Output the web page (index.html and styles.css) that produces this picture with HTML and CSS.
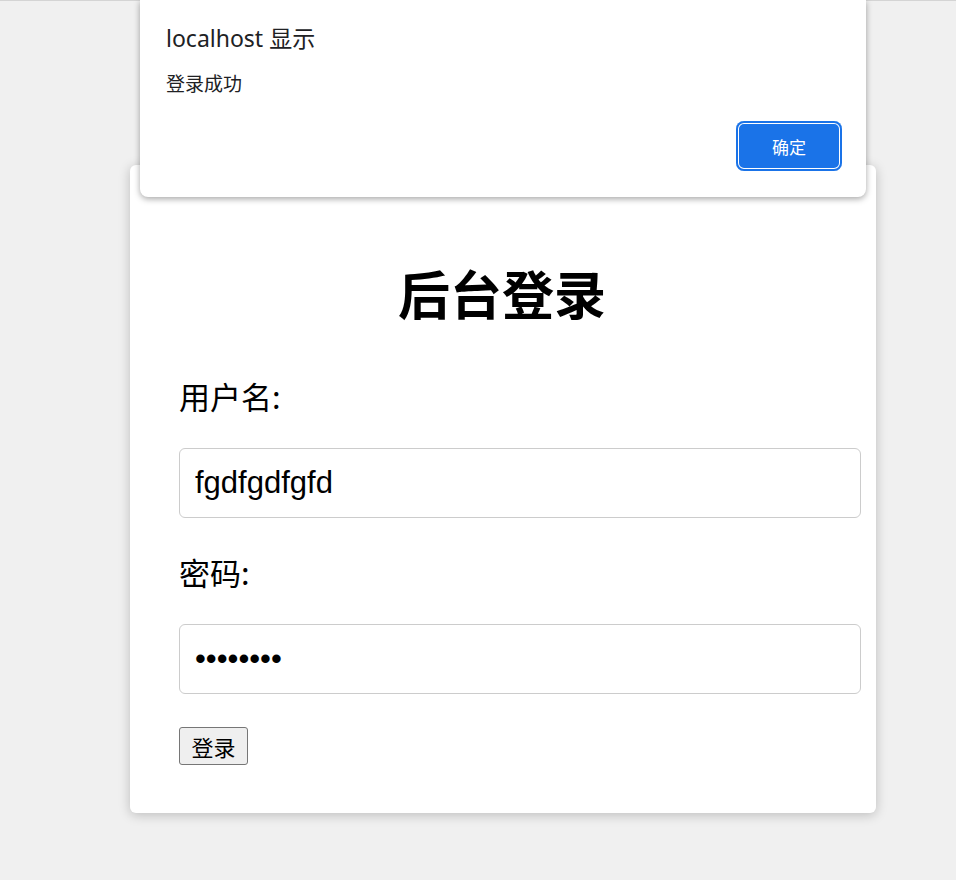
FILE: index.html
```html
<!DOCTYPE html>
<html lang="zh-CN">
<head>
<meta charset="utf-8">
<title>后台登录</title>
<link rel="stylesheet" href="styles.css">
</head>
<body>
<div class="topline"></div>
<main class="card">
  <h1 class="title">后台登录</h1>
  <form class="form">
    <label class="label label-first" for="u">用户名:</label>
    <input class="field" id="u" type="text" value="fgdfgdfgfd">
    <label class="label label-next" for="p">密码:</label>
    <input class="field" id="p" type="password" value="12345678">
    <button class="submit" type="button">登录</button>
  </form>
</main>
<div class="dialog">
  <div class="dialog-title">localhost 显示</div>
  <div class="dialog-msg">登录成功</div>
  <div class="dialog-actions">
    <button class="dialog-ok" type="button">确定</button>
  </div>
</div>
</body>
</html>
```
FILE: styles.css
```css
html, body {
  margin: 0;
  padding: 0;
}
body {
  background: #f0f0f0;
  font-family: "Noto Sans CJK SC", "Noto Sans", sans-serif;
  color: #000;
  width: 956px;
  height: 880px;
  overflow: hidden;
  position: relative;
}
.topline {
  height: 1px;
  background: #d4d4d4;
}
.card {
  box-sizing: border-box;
  margin: 164px 0 0 130px;
  width: 746px;
  padding: 48px 47px 48px 49px;
  background: #fff;
  border-radius: 6px;
  box-shadow: 0 2px 12px rgba(0, 0, 0, 0.22);
}
.title {
  margin: 50px 2px 0 -2px;
  font-size: 52px;
  line-height: 60px;
  font-weight: 700;
  text-align: center;
}
.form {
  display: flex;
  flex-direction: column;
  align-items: flex-start;
}
.label {
  display: block;
  font-size: 31px;
  line-height: 36px;
}
.label-first { margin-top: 55px; }
.label-next { margin-top: 36px; }
.field {
  margin-top: 34px;
  width: 650px;
  height: 68px;
  padding: 0 15px;
  border: 1px solid #cccccc;
  border-radius: 6px;
  font-family: "Liberation Sans", "Noto Sans CJK SC", sans-serif;
  font-size: 31px;
  color: #000;
  background: #fff;
  outline: none;
}
.submit {
  margin-top: 33px;
  box-sizing: border-box;
  width: 69px;
  height: 38px;
  padding: 0;
  font-family: "Noto Sans CJK SC", sans-serif;
  font-size: 22px;
  line-height: 1;
  color: #000;
  background: #efefef;
  border: 1px solid #767676;
  border-radius: 3px;
}
.dialog {
  position: absolute;
  left: 140px;
  top: 0;
  width: 726px;
  box-sizing: border-box;
  padding: 24px 24px 26px 26px;
  background: #fff;
  border-radius: 0 0 8px 8px;
  box-shadow: 0 2px 6px rgba(0, 0, 0, 0.35);
}
.dialog-title {
  font-family: "Noto Sans", "Noto Sans CJK SC", sans-serif;
  font-size: 23px;
  line-height: 28px;
  color: #202124;
}
.dialog-msg {
  margin-top: 19px;
  font-size: 19px;
  line-height: 24px;
  color: #202124;
}
.dialog-actions {
  margin-top: 26px;
  display: flex;
  justify-content: flex-end;
}
.dialog-ok {
  width: 106px;
  height: 50px;
  border: none;
  border-radius: 8px;
  background: #1a73e8;
  color: #fff;
  font-family: "Noto Sans CJK SC", sans-serif;
  font-size: 17px;
  box-shadow: inset 0 0 0 2px #1a73e8, inset 0 0 0 3px #fff;
}
```
